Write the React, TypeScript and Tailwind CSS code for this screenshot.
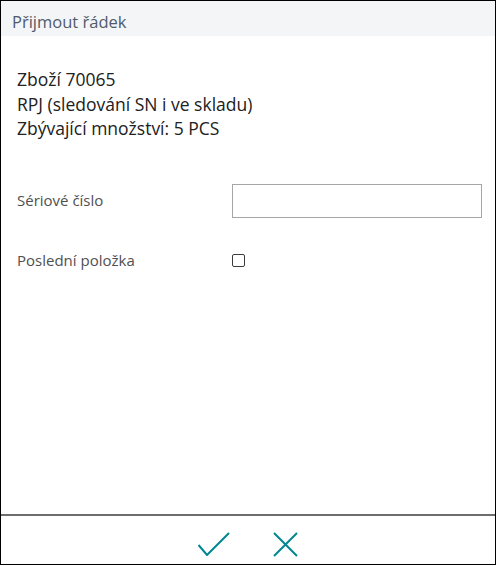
export default function App() {
  return (
    <div className="w-[497px] h-[566px] bg-white" style={{ fontFamily: '"Open Sans", "Noto Sans", sans-serif' }}>
      <div className="w-[496px] h-[565px] border border-black flex flex-col bg-white">
        <div className="h-[35px] bg-[#f4f5f7] flex items-center pl-[11px] pt-[7px] text-[16.5px] leading-[22px] text-[#4f5b6b]">
          Přijmout řádek
        </div>
        <div className="flex-1 flex flex-col">
          <div className="pt-[31px] pl-[16px] text-[17.5px] leading-[24.5px] text-[#212121]">
            <div>Zboží 70065</div>
            <div>RPJ (sledování SN i ve skladu)</div>
            <div>Zbývající množství: 5 PCS</div>
          </div>
          <div className="mt-[43.5px] flex items-center pl-[16px] h-[34px]">
            <div className="w-[215px] text-[15px] -mt-[1px] text-[#505050]">Sériové číslo</div>
            <div className="w-[250px] h-[34px] border border-[#a6a6a6]" />
          </div>
          <div className="mt-[36px] flex items-center pl-[16px] h-[13px]">
            <div className="w-[215px] text-[15px] -mt-[1px] text-[#505050]">Poslední položka</div>
            <div className="w-[13px] h-[13px] border border-[#3c3c3c] rounded-[2px]" />
          </div>
        </div>
        <div className="h-[50px] border-t-2 border-[#6e6e6e] flex items-start justify-center gap-[43px] pt-[16px]">
          <svg width="32" height="24" viewBox="0 0 32 24" fill="none">
            <path d="M0.5 13 L9 23 L31 1" stroke="#00868f" strokeWidth="2" />
          </svg>
          <svg width="25" height="25" viewBox="0 0 25 25" fill="none">
            <path d="M1 1 L24 24 M24 1 L1 24" stroke="#00868f" strokeWidth="2" />
          </svg>
        </div>
      </div>
    </div>
  );
}
